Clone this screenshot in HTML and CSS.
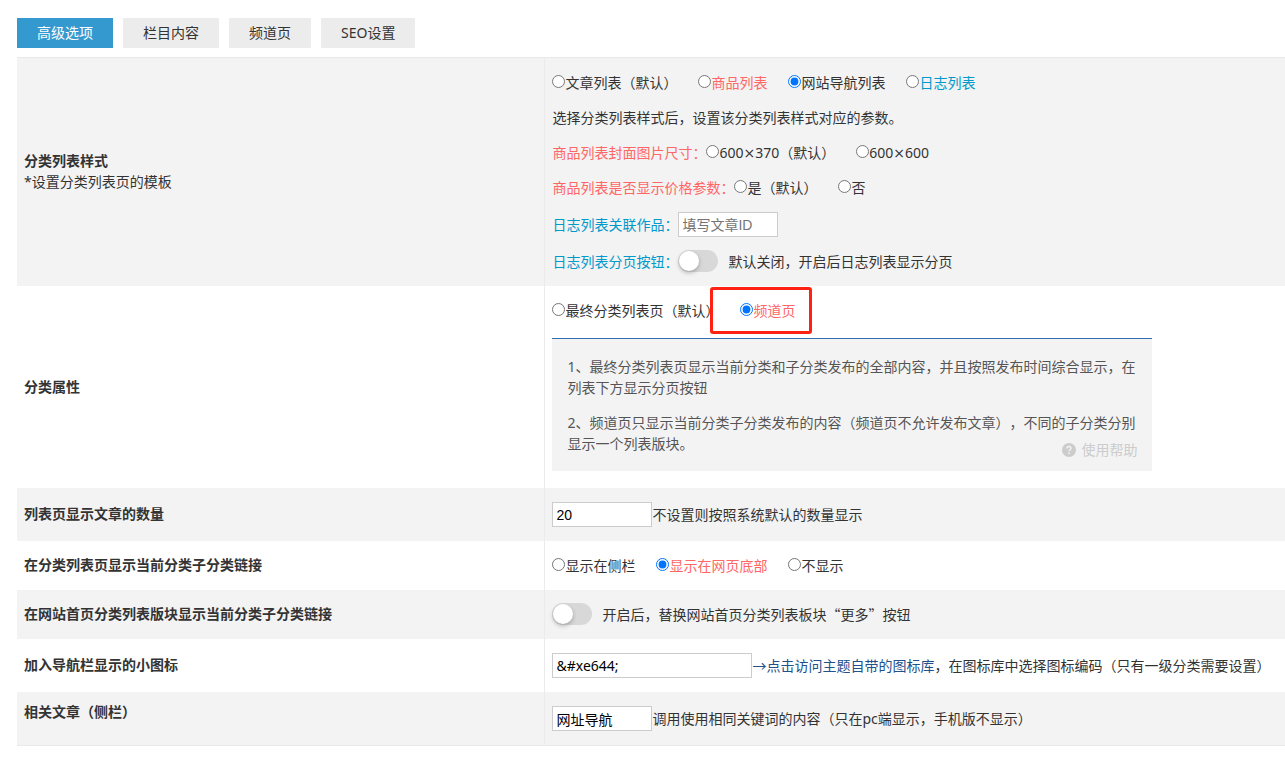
FILE: index.html
```
<!DOCTYPE html>
<html lang="zh-CN">
<head>
<meta charset="utf-8">
<meta name="viewport" content="width=device-width, initial-scale=1">
<title>高级选项</title>
<link rel="stylesheet" href="styles.css">
</head>
<body>
<nav class="tabs">
  <button type="button" class="tab tab-active">高级选项</button>
  <button type="button" class="tab">栏目内容</button>
  <button type="button" class="tab">频道页</button>
  <button type="button" class="tab">SEO设置</button>
</nav>
<form class="settings">
  <section class="row">
    <div class="name"><strong>分类列表样式</strong><span>*设置分类列表页的模板</span></div>
    <div class="field">
      <div class="line options">
        <label class="radio"><input type="radio" name="style"><span>文章列表（默认）</span></label>
        <label class="radio red"><input type="radio" name="style"><span>商品列表</span></label>
        <label class="radio"><input type="radio" name="style" checked><span>网站导航列表</span></label>
        <label class="radio blue"><input type="radio" name="style"><span>日志列表</span></label>
      </div>
      <div class="line">选择分类列表样式后，设置该分类列表样式对应的参数。</div>
      <div class="line">
        <span class="red">商品列表封面图片尺寸：</span>
        <div class="options">
          <label class="radio"><input type="radio" name="size"><span>600<span class="times">×</span>370（默认）</span></label>
          <label class="radio"><input type="radio" name="size"><span>600<span class="times">×</span>600</span></label>
        </div>
      </div>
      <div class="line">
        <span class="red">商品列表是否显示价格参数：</span>
        <div class="options">
          <label class="radio"><input type="radio" name="price"><span>是（默认）</span></label>
          <label class="radio"><input type="radio" name="price"><span>否</span></label>
        </div>
      </div>
      <div class="line">
        <label class="blue" for="work">日志列表关联作品：</label>
        <input class="text" id="work" type="text" placeholder="填写文章ID">
      </div>
      <div class="line">
        <label class="blue" for="paging">日志列表分页按钮：</label>
        <input class="switch" id="paging" type="checkbox">
        <span class="switch-note">默认关闭，开启后日志列表显示分页</span>
      </div>
    </div>
  </section>
  <section class="row">
    <div class="name"><strong>分类属性</strong></div>
    <div class="field field-attr">
      <div class="line options">
        <label class="radio"><input type="radio" name="attr"><span>最终分类列表页（默认）</span></label>
        <label class="radio red marked"><input type="radio" name="attr" checked><span>频道页</span></label>
      </div>
      <div class="tips">
        <p>1、最终分类列表页显示当前分类和子分类发布的全部内容，并且按照发布时间综合显示，在列表下方显示分页按钮</p>
        <p>2、频道页只显示当前分类子分类发布的内容（频道页不允许发布文章），不同的子分类分别显示一个列表版块。</p>
        <a class="help" href="#help">
          <svg width="14" height="14" viewBox="0 0 14 14" aria-hidden="true">
            <circle cx="7" cy="7" r="7" fill="#ccc"/>
            <path d="M5 5.6C5 4.2 5.8 3.5 7 3.5s2 .7 2 1.8c0 1.4-1.9 1.5-1.9 3" fill="none" stroke="#f3f3f3" stroke-width="1.4"/>
            <circle cx="7.1" cy="10.2" r=".9" fill="#f3f3f3"/>
          </svg>
          <span>使用帮助</span>
        </a>
      </div>
    </div>
  </section>
  <section class="row">
    <div class="name"><label for="count">列表页显示文章的数量</label></div>
    <div class="field"><div class="line"><input class="text" id="count" type="text" value="20"><span>不设置则按照系统默认的数量显示</span></div></div>
  </section>
  <section class="row">
    <div class="name"><strong>在分类列表页显示当前分类子分类链接</strong></div>
    <div class="field">
      <div class="line options">
        <label class="radio"><input type="radio" name="sub"><span>显示在侧栏</span></label>
        <label class="radio red"><input type="radio" name="sub" checked><span>显示在网页底部</span></label>
        <label class="radio"><input type="radio" name="sub"><span>不显示</span></label>
      </div>
    </div>
  </section>
  <section class="row">
    <div class="name"><label for="more">在网站首页分类列表版块显示当前分类子分类链接</label></div>
    <div class="field"><div class="line"><input class="switch" id="more" type="checkbox"><span class="switch-note cjk">开启后，替换网站首页分类列表板块“更多”按钮</span></div></div>
  </section>
  <section class="row">
    <div class="name"><label for="icon">加入导航栏显示的小图标</label></div>
    <div class="field"><div class="line"><input class="text text-wide" id="icon" type="text" value="&amp;#xe644;"><span class="cjk"><a class="link" href="#icons">→点击访问主题自带的图标库</a>，在图标库中选择图标编码（只有一级分类需要设置）</span></div></div>
  </section>
  <section class="row">
    <div class="name name-top"><label for="related">相关文章（侧栏）</label></div>
    <div class="field"><div class="line"><input class="text" id="related" type="text" value="网址导航"><span>调用使用相同关键词的内容（只在pc端显示，手机版不显示）</span></div></div>
  </section>
</form>
</body>
</html>
```

FILE: styles.css
```
* {
  box-sizing: border-box;
}

body {
  margin: 0;
  padding: 18px 0 22px 17px;
  background: #fff;
  color: #333;
  font: 14px/21px "Noto Sans", "Noto Sans CJK SC", sans-serif;
  text-spacing-trim: space-all;
}

.tabs {
  display: flex;
  gap: 10px;
  margin-bottom: 9px;
}

.tab {
  padding: 0 20px;
  border: 0;
  background: #ececec;
  color: #333;
  font: inherit;
  line-height: 30px;
  text-spacing-trim: inherit;
}

.tab-active {
  background: #3499cf;
  color: #fff;
}

.settings {
  border-top: 1px solid #e9e9e9;
  border-bottom: 1px solid #e9e9e9;
}

.row {
  display: grid;
  grid-template-columns: 41.6% 1fr;
}

.row:nth-child(odd) {
  background: #f3f3f3;
}

.name {
  display: flex;
  flex-direction: column;
  justify-content: center;
  padding: 9px 7px 11px;
}

.name strong,
.name label {
  font-weight: 700;
}

.name-top {
  justify-content: flex-start;
}

.field {
  display: flex;
  flex-direction: column;
  gap: 14px;
  padding: 14px 7px;
  border-left: 1px solid #ebebeb;
}

.field-attr {
  gap: 17px;
  padding-bottom: 17px;
}

.line {
  display: flex;
  align-items: center;
  min-height: 21px;
}

.options {
  display: flex;
  gap: 21px;
}

.radio {
  display: flex;
  align-items: center;
}

.radio input {
  width: 13px;
  height: 13px;
  margin: 0 0 2px;
  accent-color: #0075ff;
}

.red {
  color: #ff6666;
}

.blue {
  color: #0099cc;
}

.cjk {
  font-family: "Noto Sans CJK SC", sans-serif;
}

.times {
  font-family: "DejaVu Sans", sans-serif;
  line-height: 1;
}

.marked {
  position: relative;
}

.marked::after {
  content: "";
  position: absolute;
  inset: -13px -17px -13px -30px;
  border: 3px solid #ff2213;
  border-radius: 3px;
  pointer-events: none;
}

.text {
  width: 100px;
  height: 25px;
  padding: 0 3px;
  border: 1px solid #ccc;
  background: #fff;
  color: #000;
  font: 14px "Liberation Sans", "Noto Sans CJK SC", sans-serif;
}

.text::placeholder {
  color: #757575;
}

.text-wide {
  width: 200px;
  font-family: "Noto Sans", "Noto Sans CJK SC", sans-serif;
}

.switch {
  appearance: none;
  width: 40px;
  height: 22px;
  margin: -1px 0 0;
  padding: 1px;
  border-radius: 11px;
  background: #d8d8d8;
}

.switch::before {
  content: "";
  display: block;
  width: 20px;
  height: 20px;
  border-radius: 50%;
  background: #fff;
  box-shadow: 0 2px 4px rgba(0, 0, 0, 0.25);
}

.switch:checked {
  background: #3499cf;
}

.switch:checked::before {
  margin-left: auto;
}

.switch-note {
  margin-left: 10px;
}

.tips {
  position: relative;
  display: flex;
  flex-direction: column;
  gap: 14px;
  max-width: 600px;
  padding: 17px 15px;
  border-top: 1px solid #2f6db5;
  background: #f3f3f3;
  color: #555;
}

.tips p {
  margin: 0;
}

.help {
  position: absolute;
  right: 15px;
  bottom: 11px;
  display: flex;
  align-items: center;
  gap: 5px;
  color: #ccc;
  text-decoration: none;
}

.link {
  color: #21508a;
  text-decoration: none;
}
```
